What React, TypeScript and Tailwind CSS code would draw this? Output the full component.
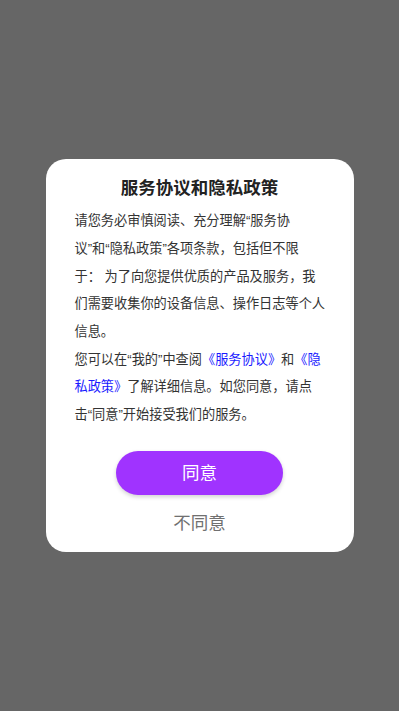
import React from "react";

export default function App() {
  const font = { fontFamily: '"Liberation Sans", "Noto Sans CJK SC", sans-serif' };
  return (
    <div
      className="w-full h-[711px] bg-[#666666] flex items-center justify-center"
      style={font}
    >
      <div className="w-[308px] bg-white rounded-[20px] flex flex-col items-center pt-[17px] pb-[17px] px-[29px]">
        <div className="text-[17.5px] leading-[24px] font-bold text-[#222222] text-center">
          服务协议和隐私政策
        </div>
        <div className="mt-[7px] w-full text-[13.2px] leading-[27.7px] text-[#333333] whitespace-nowrap">
          <div>
            请您务必审慎阅读、充分理解“服务协
            <br />
            议”和“隐私政策”各项条款，包括但不限
            <br />
            于： 为了向您提供优质的产品及服务，我
            <br />
            们需要收集你的设备信息、操作日志等个人
            <br />
            信息。
          </div>
          <div>
            您可以在“我的”中查阅
            <span className="text-[#1a1aff]">《服务协议》</span>和
            <span className="text-[#1a1aff]">《隐</span>
            <br />
            <span className="text-[#1a1aff]">私政策》</span>了解详细信息。如您同意，请点
            <br />
            击“同意”开始接受我们的服务。
          </div>
        </div>
        <button className="mt-[22px] w-[167px] h-[44px] rounded-full bg-[#a033ff] text-white text-[17.5px] leading-[24px] shadow-[0_2px_4px_rgba(0,0,0,0.18)] flex items-center justify-center">
          同意
        </button>
        <div className="mt-[16px] text-[17.5px] leading-[24px] text-[#707070]">
          不同意
        </div>
      </div>
    </div>
  );
}
